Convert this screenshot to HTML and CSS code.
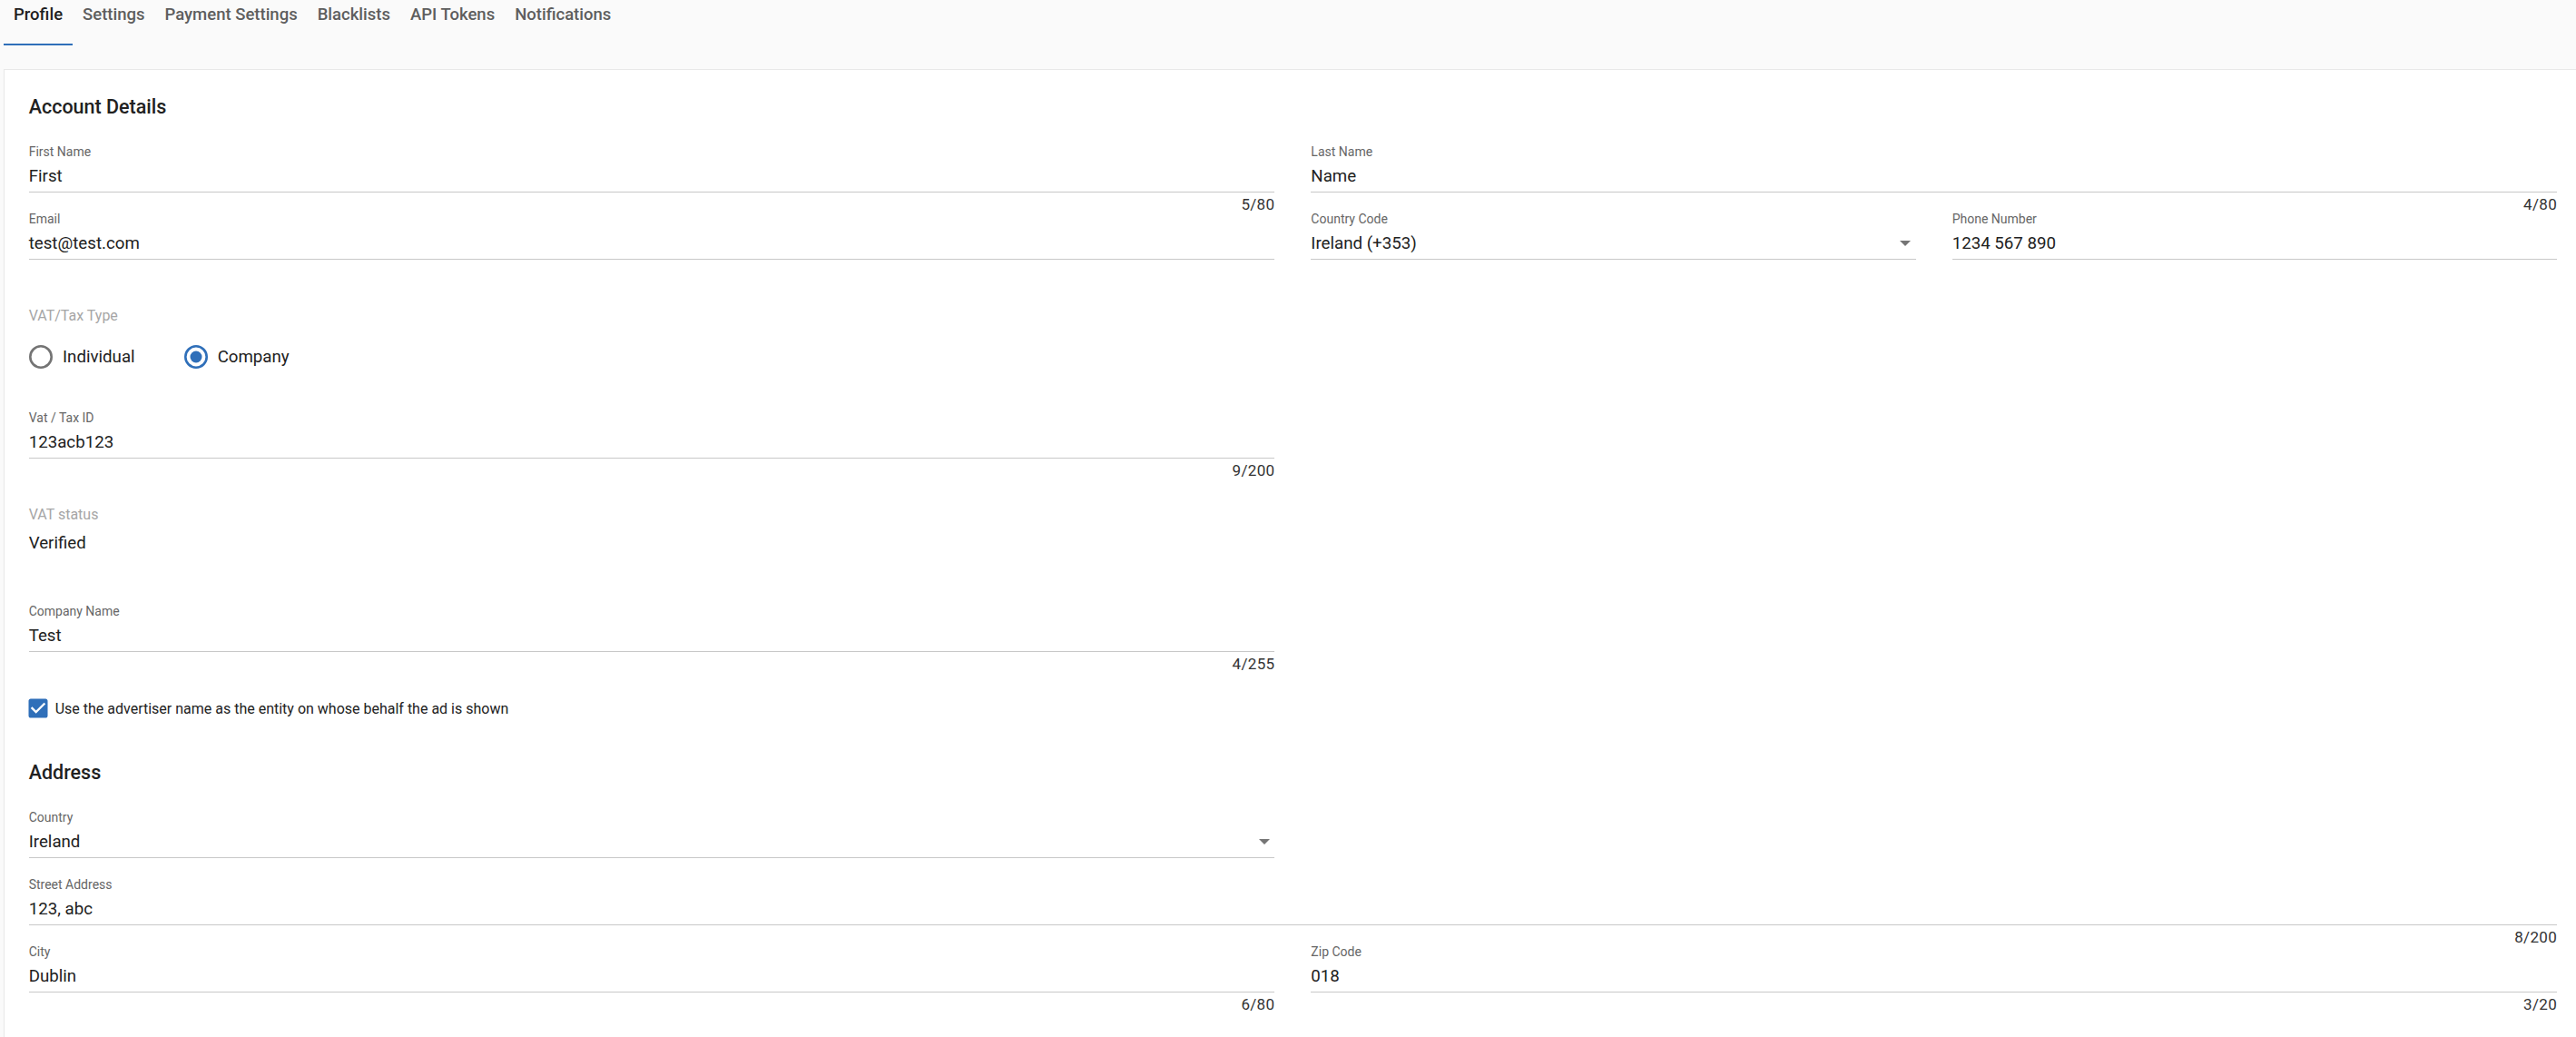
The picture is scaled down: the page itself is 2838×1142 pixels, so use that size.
FILE: index.html
```html
<!DOCTYPE html>
<html lang="en">
<head>
    <meta charset="UTF-8">
    <meta name="viewport" content="width=device-width, initial-scale=1.0">
    <title>Profile</title>
    <link rel="stylesheet" href="styles.css">
</head>
<body>

<div class="tabs">
    <a class="tab active">Profile</a>
    <a class="tab">Settings</a>
    <a class="tab">Payment Settings</a>
    <a class="tab">Blacklists</a>
    <a class="tab">API Tokens</a>
    <a class="tab">Notifications</a>
</div>

<div class="card">
    <h2 class="section-title">Account Details</h2>

    <div class="row two">
        <div class="field">
            <div class="field-label">First Name</div>
            <div class="field-input">First</div>
            <div class="field-help">5/80</div>
        </div>
        <div class="field">
            <div class="field-label">Last Name</div>
            <div class="field-input">Name</div>
            <div class="field-help">4/80</div>
        </div>
        <div class="field">
            <div class="field-label">Email</div>
            <div class="field-input">test@test.com</div>
            <div class="field-help"></div>
        </div>
        <div class="row two">
            <div class="field">
                <div class="field-label">Country Code</div>
                <div class="field-input select">
                    <span>Ireland (+353)</span>
                    <svg class="caret" width="12" height="6" viewBox="0 0 12 6"><path d="M0 0h12L6 6z"/></svg>
                </div>
                <div class="field-help"></div>
            </div>
            <div class="field">
                <div class="field-label">Phone Number</div>
                <div class="field-input">1234 567 890</div>
                <div class="field-help"></div>
            </div>
        </div>
    </div>

    <div class="half">
        <div class="group-label">VAT/Tax Type</div>
        <div class="radios">
            <label class="radio">
                <svg width="26" height="26" viewBox="0 0 26 26"><circle cx="13" cy="13" r="11.7" fill="none" stroke="#747474" stroke-width="2.6"/></svg>
                <span>Individual</span>
            </label>
            <label class="radio">
                <svg width="26" height="26" viewBox="0 0 26 26"><circle cx="13" cy="13" r="11.7" fill="none" stroke="#2f6fb9" stroke-width="2.6"/><circle cx="13" cy="13" r="6.5" fill="#2f6fb9"/></svg>
                <span>Company</span>
            </label>
        </div>

        <div class="field vat-id">
            <div class="field-label">Vat / Tax ID</div>
            <div class="field-input">123acb123</div>
            <div class="field-help">9/200</div>
        </div>

        <div class="group-label">VAT status</div>
        <div class="static">Verified</div>

        <div class="field company">
            <div class="field-label">Company Name</div>
            <div class="field-input">Test</div>
            <div class="field-help">4/255</div>
        </div>

        <label class="check">
            <svg width="28" height="28" viewBox="0 0 24 24"><path fill="#2f6fb9" d="M19 3H5c-1.11 0-2 .9-2 2v14c0 1.1.89 2 2 2h14c1.11 0 2-.9 2-2V5c0-1.1-.89-2-2-2zm-9 14l-5-5 1.41-1.41L10 14.17l7.59-7.59L19 8l-9 9z"/></svg>
            <span>Use the advertiser name as the entity on whose behalf the ad is shown</span>
        </label>
    </div>

    <h2 class="section-title address">Address</h2>

    <div class="half">
        <div class="field">
            <div class="field-label">Country</div>
            <div class="field-input select">
                <span>Ireland</span>
                <svg class="caret" width="12" height="6" viewBox="0 0 12 6"><path d="M0 0h12L6 6z"/></svg>
            </div>
            <div class="field-help"></div>
        </div>
    </div>

    <div class="field">
        <div class="field-label">Street Address</div>
        <div class="field-input">123, abc</div>
        <div class="field-help">8/200</div>
    </div>

    <div class="row two">
        <div class="field">
            <div class="field-label">City</div>
            <div class="field-input">Dublin</div>
            <div class="field-help">6/80</div>
        </div>
        <div class="field">
            <div class="field-label">Zip Code</div>
            <div class="field-input">018</div>
            <div class="field-help">3/20</div>
        </div>
    </div>
</div>

</body>
</html>
```

FILE: styles.css
```css
* {
    box-sizing: border-box;
}
body {
    margin: 0;
    font-family: Roboto, "Liberation Sans", Arial, sans-serif;
    background: #fafafa;
    color: #212121;
}
.tabs {
    display: flex;
    height: 50px;
    margin-left: 4px;
}
.tab {
    padding: 5px 11px 0;
    height: 50px;
    font-size: 18.5px;
    line-height: 23px;
    font-weight: 500;
    color: #5e5e5e;
    border-bottom: 2.5px solid transparent;
}
.tab.active {
    color: #1f1f1f;
    border-bottom-color: #2f6fb9;
}
.card {
    margin: 26px 0 0 4px;
    min-height: 1100px;
    background: #fff;
    border: 1px solid #e8e8e8;
    border-right: none;
    padding: 28px 21px 0 26.7px;
}
.section-title {
    margin: 0 0 27.5px;
    font-size: 21.5px;
    line-height: 26px;
    font-weight: 500;
    color: #212121;
}
.section-title.address {
    margin-top: 46px;
}
.row.two {
    display: grid;
    grid-template-columns: 1fr 1fr;
    column-gap: 40px;
}
.half {
    width: calc(50% - 20px);
}
.field {
    display: flex;
    flex-direction: column;
    height: 74px;
}
.field-label {
    font-size: 14px;
    line-height: 16px;
    color: #666;
}
.field-input {
    display: flex;
    align-items: center;
    height: 37.5px;
    padding: 6px 0 4px;
    border-bottom: 1px solid #c8c8c8;
    font-size: 18.7px;
    line-height: 26px;
    color: #212121;
}
.field-input.select {
    justify-content: space-between;
}
.caret {
    margin-right: 5.5px;
    fill: #757575;
}
.field-help {
    margin-top: 5.5px;
    height: 15px;
    font-size: 17px;
    line-height: 15px;
    letter-spacing: 0.3px;
    text-align: right;
    color: #333;
}
.group-label {
    margin-top: 31.5px;
    font-size: 16px;
    line-height: 20px;
    color: #a6a6a6;
}
.radios {
    display: flex;
    align-items: center;
    gap: 54px;
    height: 40px;
    margin-top: 14.5px;
    padding-left: 0.3px;
}
.radio {
    display: flex;
    align-items: center;
    gap: 11px;
    font-size: 18.7px;
    color: #212121;
}
.field.vat-id {
    margin-top: 39px;
}
.static {
    margin-top: 9px;
    font-size: 18.7px;
    line-height: 24px;
    color: #212121;
}
.field.company {
    margin-top: 54.5px;
}
.check {
    display: flex;
    align-items: center;
    gap: 4.5px;
    height: 24px;
    margin-top: 29.5px;
    margin-left: -3.5px;
    font-size: 16px;
    color: #222;
}
```
